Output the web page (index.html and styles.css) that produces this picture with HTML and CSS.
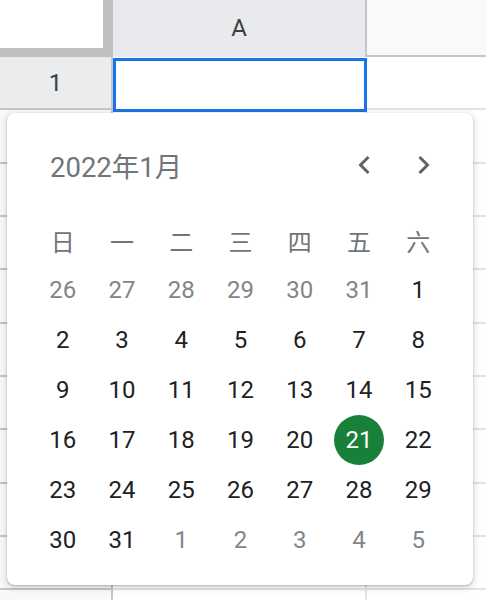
FILE: index.html
```html
<!DOCTYPE html>
<html lang="zh">
<head>
<meta charset="utf-8">
<title>Sheet date picker</title>
<link rel="stylesheet" href="styles.css">
</head>
<body>
<div class="sheet">
  <div class="corner"></div>
  <div class="colhead colhead-sel">A</div>
  <div class="colhead colhead-b"></div>

  <div class="rowhead rowhead-sel">1</div>
  <div class="cell cell-a cell-active"><div class="selection"></div></div>
  <div class="cell"></div>

  <div class="rowhead"></div><div class="cell cell-a"></div><div class="cell"></div>
  <div class="rowhead"></div><div class="cell cell-a"></div><div class="cell"></div>
  <div class="rowhead"></div><div class="cell cell-a"></div><div class="cell"></div>
  <div class="rowhead"></div><div class="cell cell-a"></div><div class="cell"></div>
  <div class="rowhead"></div><div class="cell cell-a"></div><div class="cell"></div>
  <div class="rowhead"></div><div class="cell cell-a"></div><div class="cell"></div>
  <div class="rowhead"></div><div class="cell cell-a"></div><div class="cell"></div>
  <div class="rowhead"></div><div class="cell cell-a"></div><div class="cell"></div>
  <div class="rowhead"></div><div class="cell cell-a"></div><div class="cell"></div>
  <div class="rowhead"></div><div class="cell cell-a"></div><div class="cell"></div>
</div>

<div class="picker">
  <div class="picker-head">
    <div class="picker-title">2022年1月</div>
    <div class="nav">
      <button class="nav-btn" aria-label="上个月">
        <svg width="16" height="20" viewBox="0 0 16 20"><polyline points="12.5,2 4.5,10 12.5,18" fill="none" stroke="#5f6368" stroke-width="3"/></svg>
      </button>
      <button class="nav-btn" aria-label="下个月">
        <svg width="16" height="20" viewBox="0 0 16 20"><polyline points="3.5,2 11.5,10 3.5,18" fill="none" stroke="#5f6368" stroke-width="3"/></svg>
      </button>
    </div>
  </div>
  <div class="cal">
    <div class="wd">日</div><div class="wd">一</div><div class="wd">二</div><div class="wd">三</div><div class="wd">四</div><div class="wd">五</div><div class="wd">六</div>

    <div class="d out">26</div><div class="d out">27</div><div class="d out">28</div><div class="d out">29</div><div class="d out">30</div><div class="d out">31</div><div class="d">1</div>
    <div class="d">2</div><div class="d">3</div><div class="d">4</div><div class="d">5</div><div class="d">6</div><div class="d">7</div><div class="d">8</div>
    <div class="d">9</div><div class="d">10</div><div class="d">11</div><div class="d">12</div><div class="d">13</div><div class="d">14</div><div class="d">15</div>
    <div class="d">16</div><div class="d">17</div><div class="d">18</div><div class="d">19</div><div class="d">20</div><div class="d"><span class="today">21</span></div><div class="d">22</div>
    <div class="d">23</div><div class="d">24</div><div class="d">25</div><div class="d">26</div><div class="d">27</div><div class="d">28</div><div class="d">29</div>
    <div class="d">30</div><div class="d">31</div><div class="d out">1</div><div class="d out">2</div><div class="d out">3</div><div class="d out">4</div><div class="d out">5</div>
  </div>
</div>
</body>
</html>
```

FILE: styles.css
```css
* { box-sizing: border-box; }

html, body {
  margin: 0;
  padding: 0;
  width: 486px;
  height: 600px;
  overflow: hidden;
  background: #ffffff;
  font-family: "Roboto", "Noto Sans CJK SC", sans-serif;
}

.sheet {
  display: grid;
  grid-template-columns: 113px 254px 1fr;
  grid-template-rows: 57px repeat(11, 53.33px);
  width: 486px;
  height: 600px;
  overflow: hidden;
}

.corner {
  background: #ffffff;
  border-right: 10px solid #c0c0c0;
  border-bottom: 9px solid #c0c0c0;
}

.colhead {
  display: flex;
  align-items: center;
  justify-content: center;
  font-size: 24px;
  color: #3c4043;
  padding-bottom: 2px;
}

.colhead-sel {
  background: #e8eaed;
  border-right: 2px solid #c4c7c5;
}

.colhead-b {
  background: #f8f9fa;
  border-bottom: 2px solid #c4c7c5;
}

.rowhead {
  display: flex;
  align-items: center;
  justify-content: center;
  font-size: 24px;
  color: #3c4043;
  background: #f8f9fa;
  border-bottom: 2px solid #c4c7c5;
  border-right: 2px solid #c4c7c5;
}

.rowhead-sel {
  background: #eaecee;
}

.cell {
  background: #ffffff;
  border-bottom: 2px solid #e2e3e3;
}

.cell-a {
  border-right: 2px solid #e2e3e3;
}

.cell-active {
  position: relative;
  border: none;
}

.selection {
  position: absolute;
  left: 0;
  right: 0;
  top: 1px;
  bottom: -2px;
  border: 3px solid #1a73e8;
  z-index: 2;
}

.picker {
  position: absolute;
  left: 7px;
  top: 113px;
  width: 466px;
  height: 472px;
  background: #ffffff;
  border-radius: 8px;
  box-shadow: 0 1px 2px rgba(60, 64, 67, 0.3), 0 2px 6px 2px rgba(60, 64, 67, 0.15);
  padding: 22px 25px 20px 26px;
  z-index: 5;
}

.picker-head {
  display: flex;
  align-items: center;
  justify-content: space-between;
  height: 60px;
  width: 415px;
  margin-bottom: 20px;
}

.picker-title {
  padding-left: 17px;
  font-size: 27.5px;
  color: #70757a;
}

.nav {
  display: flex;
  gap: 12px;
}

.nav-btn {
  width: 48px;
  height: 48px;
  border: none;
  background: transparent;
  padding: 0;
  display: flex;
  align-items: center;
  justify-content: center;
}

.cal {
  display: grid;
  grid-template-columns: repeat(7, 1fr);
  grid-auto-rows: 50px;
  width: 415px;
}

.wd {
  display: flex;
  align-items: center;
  justify-content: center;
  font-family: "Noto Sans CJK SC", sans-serif;
  font-size: 24px;
  color: #70757a;
}

.d {
  display: flex;
  align-items: center;
  justify-content: center;
  font-size: 24px;
  color: #202124;
}

.d.out {
  color: #80868b;
}

.today {
  display: flex;
  align-items: center;
  justify-content: center;
  width: 50px;
  height: 50px;
  border-radius: 50%;
  background: #188038;
  color: #ffffff;
}
```
